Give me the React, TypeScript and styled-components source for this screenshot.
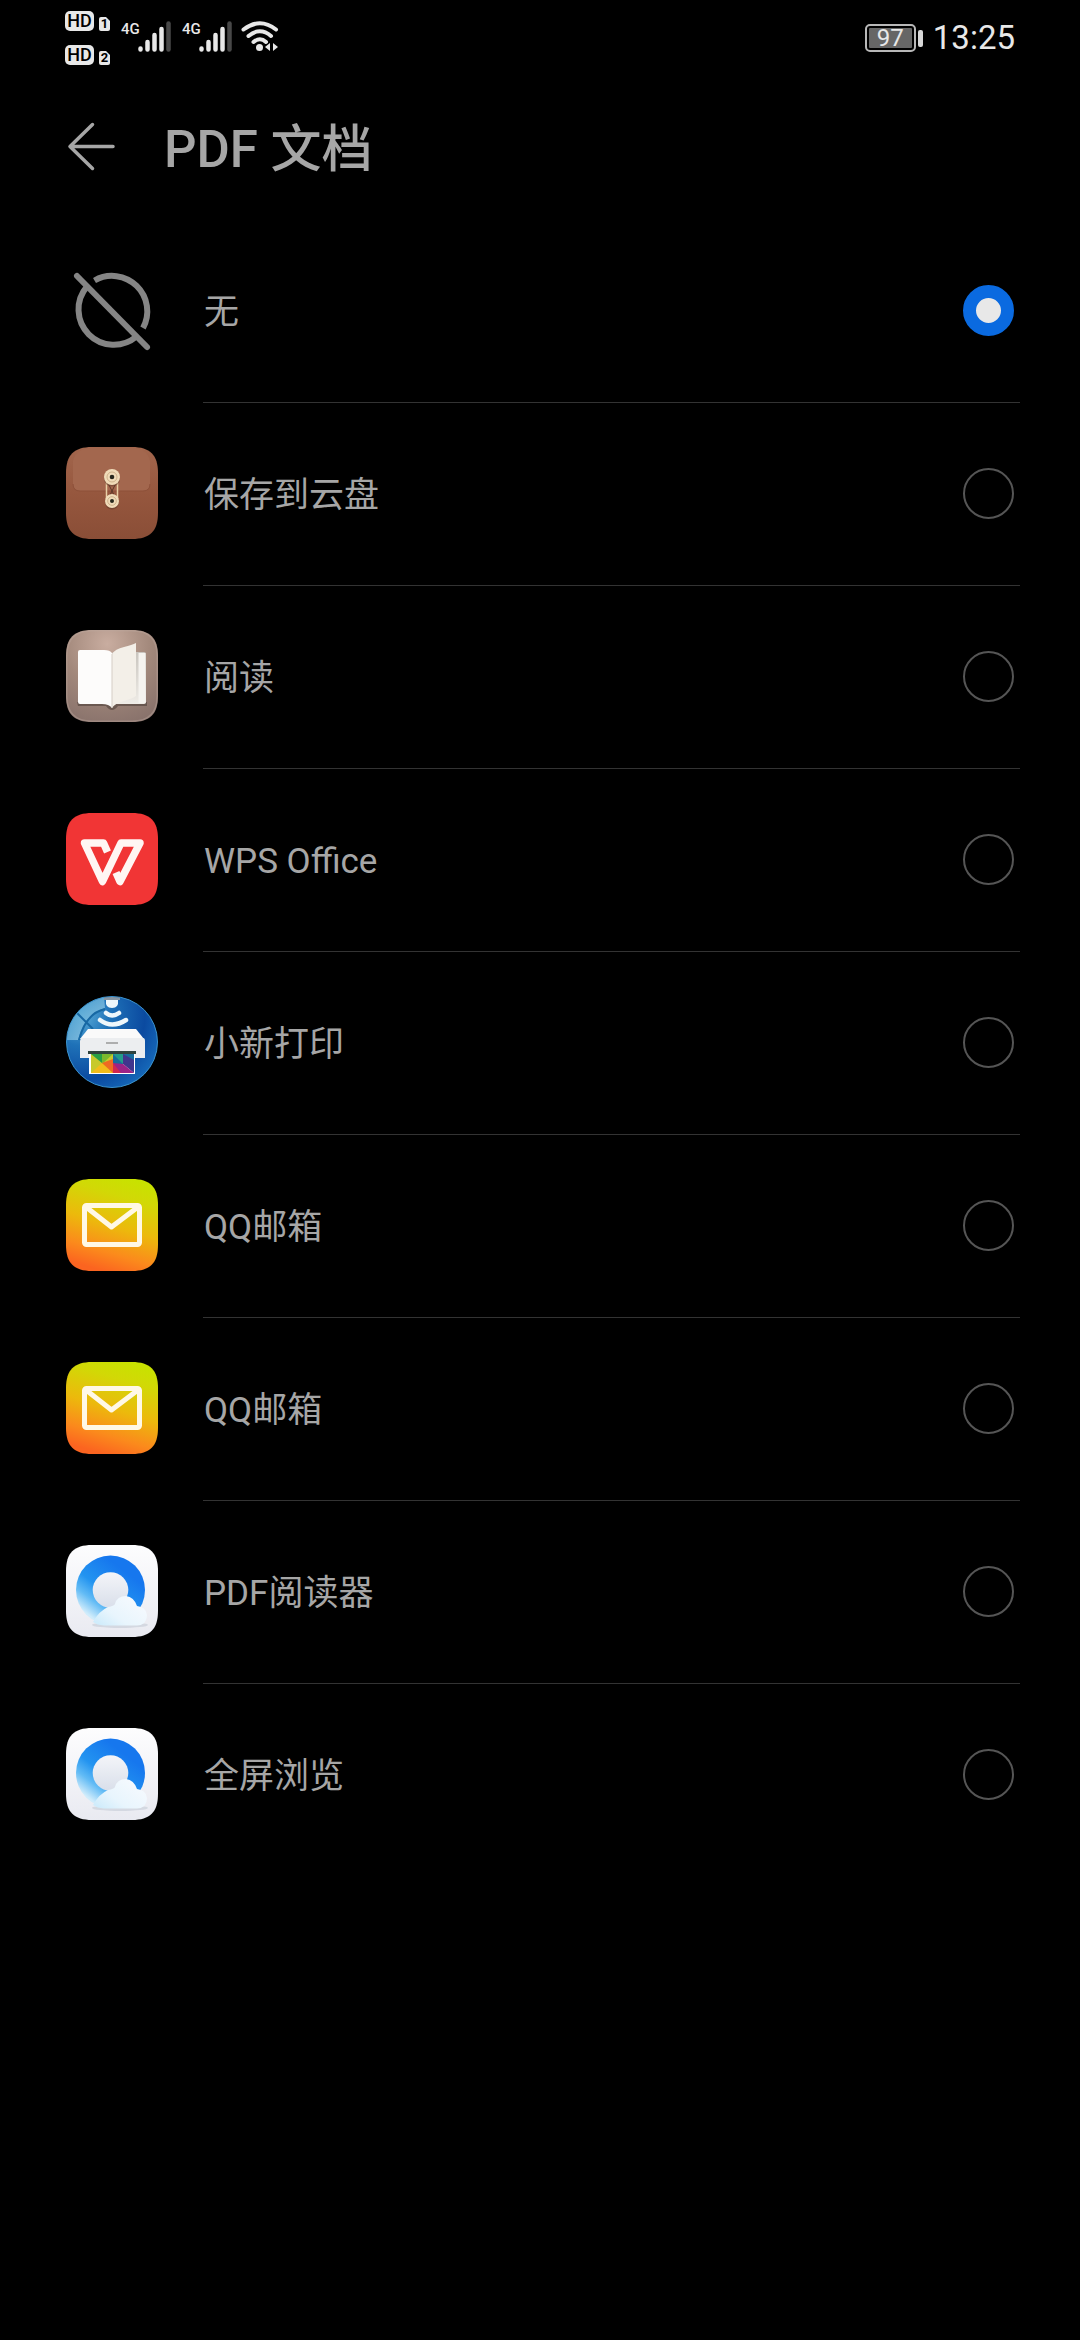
import React, { useState } from "react";
import styled, { createGlobalStyle } from "styled-components";

const GlobalStyle = createGlobalStyle`
  * { box-sizing: border-box; }
  html, body { margin: 0; background: #000; }
  body {
    color: #a6a6a6;
    font-family: Roboto, "Noto Sans CJK SC", sans-serif;
  }
`;

const Screen = styled.div`
  min-height: 100vh;
  background: #000;
`;

const StatusBar = styled.div`
  display: flex;
  align-items: flex-start;
  justify-content: space-between;
  height: 76px;
  padding: 11px 65px 0;
  color: #e8e8e8;
`;

const StatusLeft = styled.div`
  display: flex;
  align-items: flex-start;
`;

const HdStack = styled.div`
  display: flex;
  flex-direction: column;
  gap: 14px;
  margin-right: 11px;
`;

const HdRow = styled.div`
  display: flex;
  align-items: flex-end;
  gap: 5px;
`;

const HdBadge = styled.span`
  width: 29px;
  height: 20px;
  border-radius: 5px;
  background: #e8e8e8;
  color: #000;
  font-size: 18px;
  font-weight: 500;
  line-height: 20px;
  text-align: center;
`;

const SimBadge = styled.span`
  width: 11px;
  height: 14px;
  border-radius: 2px;
  background: #e8e8e8;
  color: #000;
  font-size: 13px;
  font-weight: 700;
  line-height: 14px;
  text-align: center;
  clip-path: polygon(0 0, 7px 0, 100% 4px, 100% 100%, 0 100%);
`;

const Signal = styled.div`
  display: flex;
  align-items: flex-start;
  margin: 10px 11px 0 0;
`;

const NetworkType = styled.span`
  width: 17px;
  font-size: 15px;
  font-weight: 500;
  line-height: 16px;
`;

const Wifi = styled.svg`
  margin: 10px 0 0 -2px;
`;

const StatusRight = styled.div`
  display: flex;
  align-items: center;
  gap: 10px;
  padding-top: 7px;
`;

const Battery = styled.div`
  display: flex;
  align-items: center;
  gap: 2px;
  &::after {
    content: "";
    width: 5px;
    height: 17px;
    border-radius: 2px;
    background: #d8d8d8;
  }
`;

const BatteryBody = styled.span`
  width: 51px;
  height: 28px;
  padding: 2px;
  border: 2px solid #b8b8b8;
  border-radius: 5px;
  background: #666 content-box;
  font-size: 24px;
  line-height: 21px;
  text-align: center;
`;

const Clock = styled.time`
  font-size: 33px;
  line-height: 40px;
`;

const Header = styled.header`
  display: flex;
  align-items: center;
  gap: 48px;
  height: 144px;
  padding: 0 66px 3px;
`;

const BackButton = styled.button`
  display: flex;
  padding: 0;
  border: 0;
  background: none;
  color: #a6a6a6;
`;

const Title = styled.h1`
  margin: 0;
  padding-top: 6px;
  font-size: 51px;
  font-weight: 500;
  line-height: 60px;
`;

const List = styled.ul`
  margin: 0;
  padding: 0 60px 0 66px;
  list-style: none;
`;

const Row = styled.label`
  display: flex;
  align-items: center;
  gap: 45px;
  height: 183px;
`;

const RowBody = styled.span<{ $divided: boolean }>`
  display: flex;
  flex: 1;
  align-items: center;
  justify-content: space-between;
  height: 183px;
  padding: 0 6px 2px 1px;
  border-bottom: 1px solid ${(p) => (p.$divided ? "#333" : "transparent")};
`;

const RowText = styled.span`
  padding-top: 6px;
  font-size: 35px;
  line-height: 48px;
`;

const Radio = styled.input`
  appearance: none;
  width: 51px;
  height: 51px;
  margin: 0;
  border: 2px solid #555;
  border-radius: 50%;
  &:checked {
    border: 13px solid #0a6ae0;
    background: #e8e8e8;
  }
`;

const AppIcon = styled.svg`
  flex: none;
  width: 92px;
  height: 92px;
  margin-bottom: 3px;
`;

const TILE = "M26 0H66C84 0 92 8 92 26V66C92 84 84 92 66 92H26C8 92 0 84 0 66V26C0 8 8 0 26 0Z";

function NoneIcon() {
  return (
    <AppIcon viewBox="0 0 92 92" fill="none" stroke="#858585" strokeWidth="6">
      <path d="M28.500 16.500A35.300 35.300 0 0 1 77 64" />
      <path d="M21 22.500A35.300 35.300 0 0 0 70.500 72.500" />
      <path d="M11 12L81 83" strokeLinecap="round" />
    </AppIcon>
  );
}

function CloudDiskIcon() {
  return (
    <AppIcon viewBox="0 0 92 92">
      <defs>
        <linearGradient id="leather" x1="0" y1="0" x2="0" y2="1">
          <stop offset="0" stopColor="#a2664d" />
          <stop offset=".5" stopColor="#96573e" />
          <stop offset="1" stopColor="#8a4e37" />
        </linearGradient>
      </defs>
      <path d={TILE} fill="url(#leather)" />
      <path d="M7 14C9 5 16 1 26 1H66C76 1 82 5 84 14V37Q84 44 77 44H14Q7 44 7 37Z" fill="#a3674e" />
      <path d="M7 37Q7 44 14 44H77Q84 44 84 37" fill="none" stroke="#8d5039" />
      <path d="M42 36L50 52M50 36L42 52" stroke="#5d3828" />
      <path d="M40.500 34V52M51.500 34V52" stroke="#e9cfa5" strokeWidth="1.500" />
      <circle cx="46" cy="31.500" r="8" fill="#5d3828" opacity=".5" />
      <circle cx="46" cy="55.500" r="7" fill="#5d3828" opacity=".5" />
      <circle cx="46" cy="30" r="8" fill="#f0dcb9" />
      <circle cx="46" cy="30" r="5" fill="none" stroke="#cdb28c" />
      <circle cx="46" cy="30" r="2.300" fill="#27281d" />
      <circle cx="46" cy="54" r="7" fill="#f0dcb9" />
      <circle cx="46" cy="54" r="4.300" fill="none" stroke="#cdb28c" />
      <circle cx="46" cy="54" r="2" fill="#27281d" />
    </AppIcon>
  );
}

function ReaderIcon() {
  return (
    <AppIcon viewBox="0 0 92 92">
      <defs>
        <radialGradient id="desk" cx=".45" cy=".15" r=".95">
          <stop offset="0" stopColor="#c9ada0" />
          <stop offset=".5" stopColor="#a2887b" />
          <stop offset="1" stopColor="#86706a" />
        </radialGradient>
        <linearGradient id="backPage" x1="0" y1="0" x2="0" y2="1">
          <stop offset="0" stopColor="#c9c5bf" />
          <stop offset="1" stopColor="#efece7" />
        </linearGradient>
      </defs>
      <path d={TILE} fill="url(#desk)" />
      <path d="M26 .8H66C83 .8 91.200 9 91.200 26V66C91.200 83 83 91.200 66 91.200H26C9 91.200 .8 83 .8 66V26C.8 9 9 .8 26 .8Z" fill="none" stroke="#bfa9a0" strokeWidth="1.500" opacity=".4" />
      <path d="M11 72H40Q46 80 52 72H81V76H52Q46 84 40 76H12Z" fill="#40332d" opacity=".5" />
      <rect x="46" y="22" width="34" height="52" rx="2" fill="url(#backPage)" />
      <path d="M76 23V73" stroke="#f5f3ef" strokeWidth="7" />
      <path d="M14 20H38Q44 20 46 23V78Q43 74 36 74H14Q12 74 12 72V22Q12 20 14 20Z" fill="#fdfcfb" />
      <path d="M46 24Q49 19 58 17Q66 15 70 13V66Q68 68 58 71Q49 73 46 78Z" fill="#f3efe8" />
      <path d="M46 24V78" stroke="#d5cec5" />
    </AppIcon>
  );
}

function WpsIcon() {
  return (
    <AppIcon viewBox="0 0 92 92">
      <path d={TILE} fill="#f13535" />
      <path
        d="M41.500 39L37.500 30H18.500L36.500 68.500L55 30H74L54 68.500L50 59.500"
        fill="none"
        stroke="#fff6f3"
        strokeWidth="7.500"
        strokeLinejoin="round"
      />
    </AppIcon>
  );
}

function PrinterIcon() {
  return (
    <AppIcon viewBox="0 0 92 92">
      <defs>
        <radialGradient id="globe" cx=".15" cy=".2" r=".95">
          <stop offset="0" stopColor="#5fb0da" />
          <stop offset=".35" stopColor="#1f72b8" />
          <stop offset=".75" stopColor="#0b4aa0" />
          <stop offset="1" stopColor="#1567b8" />
        </radialGradient>
        <linearGradient id="shine" x1="0" y1="0" x2="1" y2="1">
          <stop offset="0" stopColor="#2d8fc8" />
          <stop offset="1" stopColor="#b4dcee" />
        </linearGradient>
        <clipPath id="globeClip"><circle cx="46" cy="46" r="45" /></clipPath>
      </defs>
      <circle cx="46" cy="46" r="45.500" fill="url(#globe)" stroke="#3b92cc" />
      <g clipPath="url(#globeClip)">
        <path d="M0 44Q5 8 38 0L39 12Q18 18 12 44Z" fill="url(#shine)" opacity=".8" />
        <path d="M10 16L27 33M39 13Q20 17 13 44" fill="none" stroke="#1768a4" strokeWidth="2" />
        <path d="M38 0H54V4H38Z" fill="#8796a3" />
        <path d="M40 4H52Q53 12 46 12Q39 12 40 4Z" fill="#eef7fb" />
        <path d="M40 17Q46 22 53 17M34 24Q46 33 60 24" fill="none" stroke="#eef7fb" strokeWidth="4.500" strokeLinecap="round" />
        <path d="M22 33H70L78 43H14Z" fill="#fafafa" />
        <path d="M15 42H77Q79 42 79 45V62H14V45Z" fill="#eceef0" />
        <path d="M40 47H52" stroke="#999" strokeWidth="1.500" />
        <path d="M22 55H70V58H22Z" fill="#30443e" />
        <path d="M23 58H69V78H23Z" fill="#fff" />
        <path d="M25 58H47V77H25Z" fill="#c7c92b" />
        <path d="M25 58H36V67Z" fill="#27a044" />
        <path d="M36 58H47L36 68Z" fill="#7ab82d" />
        <path d="M25 77L36 67L47 77Z" fill="#f3bc1b" />
        <path d="M36 67L47 63V77Z" fill="#ee6a22" />
        <path d="M47 58H68V68H47Z" fill="#176c9c" />
        <path d="M47 58H57V68Z" fill="#239c8b" />
        <path d="M57 58L68 64V77L57 68Z" fill="#40358d" />
        <path d="M47 67L57 68L68 77H47Z" fill="#9b2387" />
        <path d="M47 67L55 77H47Z" fill="#d2264e" />
      </g>
    </AppIcon>
  );
}

function MailIcon() {
  return (
    <AppIcon viewBox="0 0 92 92">
      <defs>
        <linearGradient id="mail" x1=".7" y1="0" x2=".4" y2="1">
          <stop offset="0" stopColor="#c8e200" />
          <stop offset=".2" stopColor="#d2d806" />
          <stop offset=".52" stopColor="#ecb90c" />
          <stop offset=".8" stopColor="#fb8a1c" />
          <stop offset="1" stopColor="#fb6420" />
        </linearGradient>
      </defs>
      <path d={TILE} fill="url(#mail)" />
      <rect x="18.500" y="26.500" width="55" height="39" rx="2" fill="none" stroke="#fff8e6" strokeWidth="5" />
      <path d="M20 28L45.500 48L72 28" fill="none" stroke="#fff8e6" strokeWidth="5" strokeLinejoin="round" />
    </AppIcon>
  );
}

function BrowserIcon() {
  return (
    <AppIcon viewBox="0 0 92 92">
      <defs>
        <linearGradient id="tile" x1="0" y1="0" x2="0" y2="1">
          <stop offset="0" stopColor="#fdfdfe" />
          <stop offset="1" stopColor="#e9eaf1" />
        </linearGradient>
        <linearGradient id="ring" x1=".8" y1=".3" x2=".3" y2=".95">
          <stop offset="0" stopColor="#1677ee" />
          <stop offset=".5" stopColor="#2394f0" />
          <stop offset=".75" stopColor="#62bbf5" />
          <stop offset="1" stopColor="#d0ecfb" />
        </linearGradient>
        <linearGradient id="core" x1="0" y1="0" x2="0" y2="1">
          <stop offset="0" stopColor="#f4f5f9" />
          <stop offset="1" stopColor="#d9dfea" />
        </linearGradient>
        <linearGradient id="cloud" x1="0" y1=".8" x2=".8" y2=".2">
          <stop offset="0" stopColor="#d0ecfb" />
          <stop offset=".4" stopColor="#e8f5fd" />
          <stop offset="1" stopColor="#f4f9fe" />
        </linearGradient>
      </defs>
      <path d={TILE} fill="url(#tile)" />
      <ellipse cx="54" cy="80" rx="28" ry="3" fill="#c5cbd6" opacity=".6" />
      <circle cx="44.500" cy="45" r="34.500" fill="url(#ring)" />
      <circle cx="44.500" cy="45" r="17.800" fill="url(#core)" />
      <path d="M27 77Q33 66 42 62Q48 61 49 59Q51 51 60 51Q68 52 71 61Q80 62 81 70Q81 80 71 80.500H38Q31 80 27 77Z" fill="url(#cloud)" />
    </AppIcon>
  );
}

function SignalBars() {
  return (
    <svg width="33" height="31" viewBox="0 0 33 31" aria-hidden="true">
      <g stroke="#e8e8e8" strokeWidth="4.500" strokeLinecap="round">
        <path d="M2.500 27.500V28.500M9.500 21V28.500M16.500 14V28.500M23.500 8V28.500" />
        <path d="M30.500 2.500V28.500" stroke="#484848" />
      </g>
    </svg>
  );
}

const apps = [
  { id: "none", name: "无", Icon: NoneIcon },
  { id: "cloud", name: "保存到云盘", Icon: CloudDiskIcon },
  { id: "reader", name: "阅读", Icon: ReaderIcon },
  { id: "wps", name: "WPS Office", Icon: WpsIcon },
  { id: "printer", name: "小新打印", Icon: PrinterIcon },
  { id: "mail", name: "QQ邮箱", Icon: MailIcon },
  { id: "mail-alt", name: "QQ邮箱", Icon: MailIcon },
  { id: "pdf", name: "PDF阅读器", Icon: BrowserIcon },
  { id: "fullscreen", name: "全屏浏览", Icon: BrowserIcon },
];

export default function App() {
  const [selected, setSelected] = useState("none");
  return (
    <Screen>
      <GlobalStyle />
      <StatusBar>
        <StatusLeft>
          <HdStack>
            {["1", "2"].map((sim) => (
              <HdRow key={sim}>
                <HdBadge>HD</HdBadge>
                <SimBadge>{sim}</SimBadge>
              </HdRow>
            ))}
          </HdStack>
          {["first", "second"].map((slot) => (
            <Signal key={slot}>
              <NetworkType>4G</NetworkType>
              <SignalBars />
            </Signal>
          ))}
          <Wifi width="38" height="32" viewBox="0 0 38 32" aria-hidden="true">
            <g fill="none" stroke="#e8e8e8" strokeWidth="4" strokeLinecap="round">
              <path d="M2.500 8.500Q19 -4 35 8.500" />
              <path d="M7.500 15Q19 5.500 30 15" />
              <path d="M12.500 21Q19 15.500 25 21" />
            </g>
            <circle cx="18.500" cy="26.500" r="3.500" fill="#e8e8e8" />
            <path d="M24 26L29 22V30ZM32 22L37 26L32 30Z" fill="#e8e8e8" />
          </Wifi>
        </StatusLeft>
        <StatusRight>
          <Battery>
            <BatteryBody>97</BatteryBody>
          </Battery>
          <Clock>13:25</Clock>
        </StatusRight>
      </StatusBar>
      <Header>
        <BackButton type="button" aria-label="返回">
          <svg width="50" height="50" viewBox="0 0 50 50" fill="none" stroke="currentColor" strokeWidth="3.500" strokeLinecap="round" strokeLinejoin="round">
            <path d="M26.500 2.500L4 24.500L26.500 46.500M4 24.500H47" />
          </svg>
        </BackButton>
        <Title>PDF 文档</Title>
      </Header>
      <List>
        {apps.map(({ id, name, Icon }, index) => (
          <li key={id}>
            <Row>
              <Icon />
              <RowBody $divided={index < apps.length - 1}>
                <RowText>{name}</RowText>
                <Radio type="radio" name="pdf-app" checked={selected === id} onChange={() => setSelected(id)} />
              </RowBody>
            </Row>
          </li>
        ))}
      </List>
    </Screen>
  );
}
